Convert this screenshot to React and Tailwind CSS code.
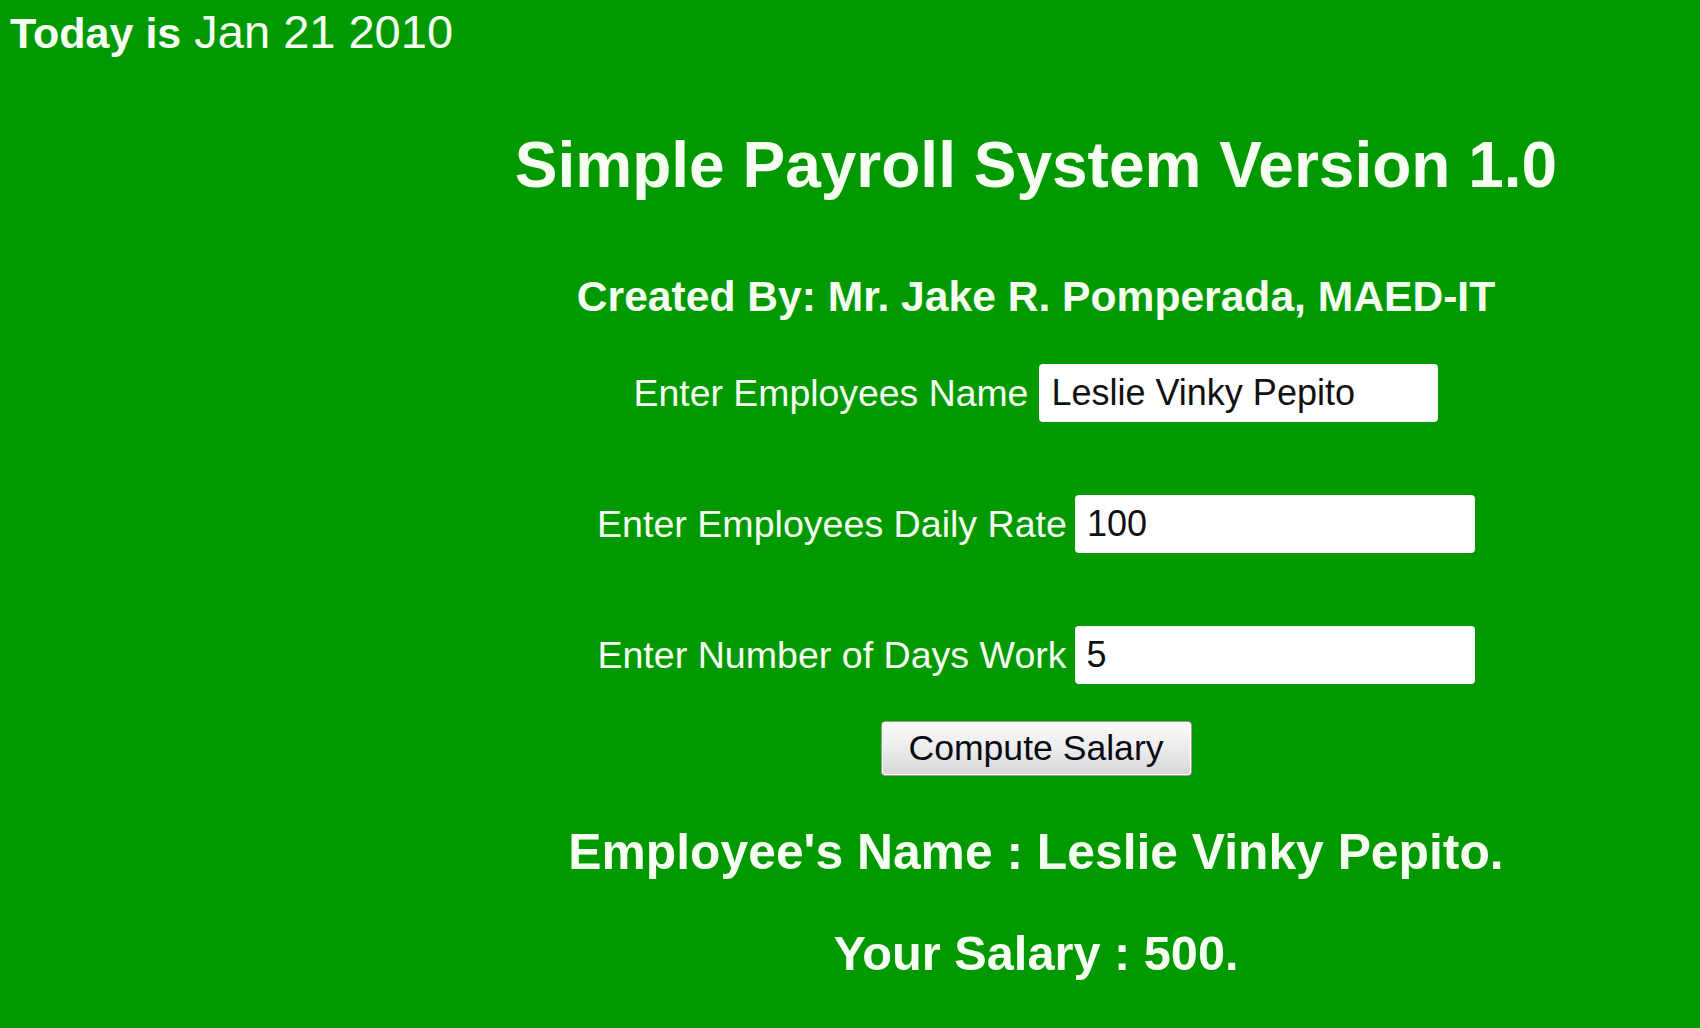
import React from "react";

export default function App() {
  const font = { fontFamily: '"Liberation Sans", Arial, sans-serif' };
  return (
    <div className="min-h-screen w-full overflow-hidden bg-[#009a00] text-[#f7fff2]" style={font}>
      <div className="h-[64px] pt-[6px] pl-[10px] leading-[52px] whitespace-nowrap">
        <span className="font-bold text-[43px]">Today is</span>
        <span className="text-[47px]"> Jan 21 2010</span>
      </div>
      <div className="flex flex-col items-center pl-[372px]">
        <h1 className="mt-[64px] text-[64px] leading-[74px] font-bold whitespace-nowrap">
          Simple Payroll System Version 1.0
        </h1>
        <h3 className="mt-[69px] text-[42.6px] leading-[50px] font-bold whitespace-nowrap">
          Created By: Mr. Jake R. Pomperada, MAED-IT
        </h3>
        <div className="mt-[43px] flex items-center gap-[11px] text-[37.4px] whitespace-nowrap">
          <label>Enter Employees Name</label>
          <input
            readOnly
            value="Leslie Vinky Pepito"
            className="h-[58px] w-[399px] rounded-[4px] bg-white pl-[12px] text-[36px] text-[#111111] outline-none"
            style={font}
          />
        </div>
        <div className="mt-[73px] flex items-center gap-[8px] text-[37.6px] whitespace-nowrap">
          <label>Enter Employees Daily Rate</label>
          <input
            readOnly
            value="100"
            className="h-[58px] w-[400px] rounded-[4px] bg-white pl-[12px] text-[36px] text-[#111111] outline-none"
            style={font}
          />
        </div>
        <div className="mt-[73px] flex items-center gap-[8px] text-[37.6px] whitespace-nowrap">
          <label>Enter Number of Days Work</label>
          <input
            readOnly
            value="5"
            className="h-[58px] w-[400px] rounded-[4px] bg-white pl-[12px] text-[36px] text-[#111111] outline-none"
            style={font}
          />
        </div>
        <button
          className="mt-[37px] h-[55px] w-[311px] rounded-[4px] border border-[#9c9c9c] bg-gradient-to-b from-[#fbfbfb] via-[#ececec] to-[#d6d6d6] text-[35.6px] text-[#0a0a14] shadow-[inset_0_0_0_1px_#ffffff]"
          style={font}
        >
          Compute Salary
        </button>
        <h2 className="mt-[47px] text-[49.8px] leading-[58px] font-bold whitespace-nowrap">
          Employee's Name : Leslie Vinky Pepito.
        </h2>
        <h2 className="mt-[44px] text-[48.7px] leading-[56px] font-bold whitespace-nowrap">
          Your Salary : 500.
        </h2>
      </div>
    </div>
  );
}
